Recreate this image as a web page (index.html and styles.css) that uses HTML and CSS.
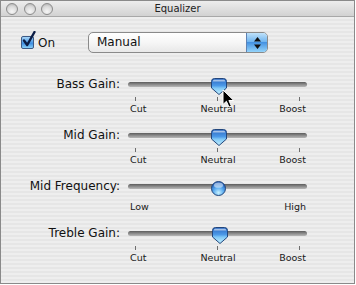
FILE: index.html
```html
<!DOCTYPE html>
<html lang="en">

<head>
    <meta charset="UTF-8">
    <meta name="viewport" content="width=device-width, initial-scale=1.0">
    <title>Equalizer</title>
    <link rel="stylesheet" href="styles.css">
</head>

<body>
    <div class="window">
        <div class="titlebar">
            <div class="lights">
                <span class="light"></span>
                <span class="light"></span>
                <span class="light"></span>
            </div>
            <div class="title">Equalizer</div>
        </div>

        <div class="content">
            <div class="top-row">
                <label class="check">
                    <span class="box">
                        <svg class="checkmark" width="16" height="18" viewBox="0 0 16 18">
                            <path d="M3 9.5l3.2 4.5L13.5 1" fill="none" stroke="#0c1d45" stroke-width="2.4" stroke-linecap="round" stroke-linejoin="round"/>
                        </svg>
                    </span>
                    On
                </label>
                <div class="popup">
                    <span class="popup-text">Manual</span>
                    <span class="popup-arrows">
                        <svg width="7" height="12" viewBox="0 0 7 12">
                            <path d="M3.5 0L7 4.5H0Z M0 7.5H7L3.5 12Z" fill="#111"/>
                        </svg>
                    </span>
                </div>
            </div>

            <div class="sliders">
                <div class="row">
                    <div class="label">Bass Gain:</div>
                    <div class="slider">
                        <div class="track-wrap">
                            <div class="track"></div>
                            <svg class="thumb" style="left:83px" width="16" height="17" viewBox="0 0 16 17">
                                <defs>
                                    <linearGradient id="tg" x1="0" y1="0" x2="0" y2="1">
                                        <stop offset="0" stop-color="#2a66c0"/>
                                        <stop offset=".45" stop-color="#4c9ae8"/>
                                        <stop offset=".6" stop-color="#80c8f6"/>
                                        <stop offset="1" stop-color="#c4f0ff"/>
                                    </linearGradient>
                                </defs>
                                <path d="M.5 3.5Q.5.5 3.5.5h9q3 0 3 3V10L8 16.5.5 10Z" fill="url(#tg)" stroke="#22467c"/>
                                <path d="M3 1.8h10q1.2 0 1.2 1.8H1.8Q1.8 1.8 3 1.8Z" fill="#fff" opacity=".55"/>
                            </svg>
                        </div>
                        <div class="ticks"><i></i><i></i><i></i></div>
                        <div class="scale"><span>Cut</span><span>Neutral</span><span>Boost</span></div>
                    </div>
                </div>

                <div class="row">
                    <div class="label">Mid Gain:</div>
                    <div class="slider">
                        <div class="track-wrap">
                            <div class="track"></div>
                            <svg class="thumb" style="left:83px" width="16" height="17" viewBox="0 0 16 17">
                                <path d="M.5 3.5Q.5.5 3.5.5h9q3 0 3 3V10L8 16.5.5 10Z" fill="url(#tg)" stroke="#22467c"/>
                                <path d="M3 1.8h10q1.2 0 1.2 1.8H1.8Q1.8 1.8 3 1.8Z" fill="#fff" opacity=".55"/>
                            </svg>
                        </div>
                        <div class="ticks"><i></i><i></i><i></i></div>
                        <div class="scale"><span>Cut</span><span>Neutral</span><span>Boost</span></div>
                    </div>
                </div>

                <div class="row">
                    <div class="label">Mid Frequency:</div>
                    <div class="slider">
                        <div class="track-wrap">
                            <div class="track"></div>
                            <svg class="knob" style="left:83px" width="15" height="15" viewBox="0 0 15 15">
                                <defs>
                                    <radialGradient id="kg" cx=".5" cy=".8" r=".75">
                                        <stop offset="0" stop-color="#c8f2ff"/>
                                        <stop offset=".5" stop-color="#5aaaee"/>
                                        <stop offset="1" stop-color="#1e5ab6"/>
                                    </radialGradient>
                                </defs>
                                <circle cx="7.5" cy="7.5" r="7" fill="url(#kg)" stroke="#22467c"/>
                                <ellipse cx="7.5" cy="4.2" rx="4.5" ry="2.6" fill="#fff" opacity=".5"/>
                            </svg>
                        </div>
                        <div class="scale loose"><span>Low</span><span></span><span>High</span></div>
                    </div>
                </div>

                <div class="row">
                    <div class="label">Treble Gain:</div>
                    <div class="slider">
                        <div class="track-wrap">
                            <div class="track"></div>
                            <svg class="thumb" style="left:84px" width="16" height="17" viewBox="0 0 16 17">
                                <path d="M.5 3.5Q.5.5 3.5.5h9q3 0 3 3V10L8 16.5.5 10Z" fill="url(#tg)" stroke="#22467c"/>
                                <path d="M3 1.8h10q1.2 0 1.2 1.8H1.8Q1.8 1.8 3 1.8Z" fill="#fff" opacity=".55"/>
                            </svg>
                        </div>
                        <div class="ticks"><i></i><i></i><i></i></div>
                        <div class="scale"><span>Cut</span><span>Neutral</span><span>Boost</span></div>
                    </div>
                </div>
            </div>
        </div>

        <svg class="cursor" width="13" height="19" viewBox="0 0 13 19">
            <path d="M1 1v14.5l3.4-3.2 2.6 5.8 2.4-1-2.5-5.6H11.8Z" fill="#000" stroke="#fff" stroke-width="1" stroke-linejoin="round"/>
        </svg>
    </div>
</body>

</html>
```

FILE: styles.css
```css
body {
    margin: 0;
    background-color: #fff;
    font-family: "DejaVu Sans", "Liberation Sans", sans-serif;
    color: #111;
}
.window {
    position: relative;
    width: 353px;
    height: 282px;
    border: 1px solid #8a8a8a;
    background: repeating-linear-gradient(#eeeeee 0 2px, #e6e6e6 2px 4px);
}
.titlebar {
    height: 15px;
    border-bottom: 1px solid #a8a8a8;
    background: linear-gradient(#ededed, #d2d2d2);
    display: grid;
    grid-template-columns: 1fr auto 1fr;
    align-items: center;
}
.lights {
    display: flex;
    gap: 5.5px;
    padding-left: 5px;
}
.light {
    width: 12px;
    height: 12px;
    border-radius: 50%;
    box-sizing: border-box;
    border: 1px solid #8c8c8c;
    background: radial-gradient(circle at 50% 75%, #f6f6f6 0, #dadada 55%, #a8a8a8 100%);
}
.title {
    font-size: 10px;
    color: #222;
}
.content {
    padding: 15px 0 0 7px;
}
.top-row {
    display: flex;
    align-items: center;
    height: 21px;
    padding-left: 13px;
}
.check {
    display: flex;
    align-items: center;
    gap: 4px;
    width: 67px;
    font-size: 12px;
}
.box {
    position: relative;
    width: 13px;
    height: 13px;
    box-sizing: border-box;
    border: 1px solid #3c5a86;
    border-radius: 2px;
    background: linear-gradient(#a8d6f8, #4c9ae6 50%, #3a8ae0 55%, #8ad0f8);
}
.checkmark {
    position: absolute;
    left: -1px;
    top: -6px;
}
.popup {
    display: flex;
    width: 180px;
    height: 21px;
    box-sizing: border-box;
    border: 1px solid #8a8a8a;
    border-radius: 5px;
    overflow: hidden;
    background: linear-gradient(#ffffff, #f6f6f6 50%, #e8e8e8);
    font-size: 12px;
}
.popup-text {
    flex: 1;
    padding-left: 8px;
    line-height: 19px;
}
.popup-arrows {
    width: 20px;
    border-left: 1px solid #5e82b4;
    display: flex;
    align-items: center;
    justify-content: center;
    background: linear-gradient(#c0e2fa, #72b6f0 45%, #4592e2 50%, #94d4fa);
}
.sliders {
    margin-top: 22px;
    display: flex;
    flex-direction: column;
    gap: 11px;
}
.row {
    display: grid;
    grid-template-columns: 112px 179px;
    column-gap: 8px;
    align-items: start;
}
.label {
    text-align: right;
    font-size: 12px;
    line-height: 19px;
    color: #111;
}
.track-wrap {
    position: relative;
    height: 19px;
    display: flex;
    align-items: center;
}
.track {
    flex: 1;
    height: 5px;
    border-radius: 3px;
    background: linear-gradient(#5c5c5c, #8c8c8c 50%, #b8b8b8);
}
.thumb {
    position: absolute;
    top: 3px;
}
.knob {
    position: absolute;
    top: 4px;
}
.ticks {
    display: flex;
    justify-content: space-between;
    padding: 0 7px;
    margin-top: 3px;
    height: 4px;
}
.ticks i {
    width: 1px;
    background-color: #6e6e6e;
}
.scale {
    display: grid;
    grid-template-columns: 1fr auto 1fr;
    margin-top: 2px;
    padding: 0 1px 0 2px;
    font-size: 9.5px;
    line-height: 12px;
    color: #1a1a1a;
}
.scale span:first-child {
    justify-self: start;
}
.scale span:last-child {
    justify-self: end;
}
.scale.loose {
    margin-top: 5px;
}
.cursor {
    position: absolute;
    left: 221px;
    top: 88px;
}
```
